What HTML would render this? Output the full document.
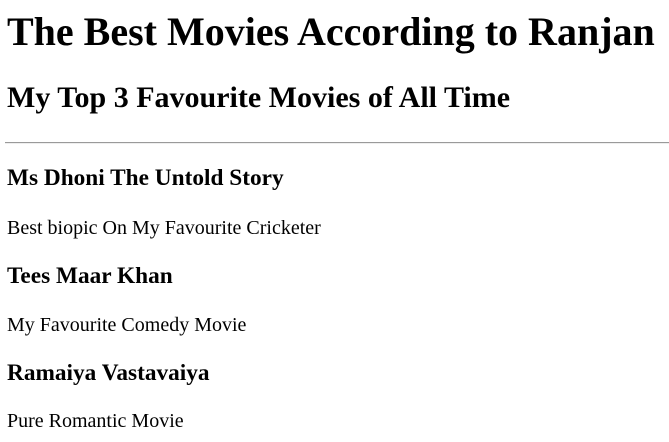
<!DOCTYPE html>
<html><head><meta charset="utf-8"><style>
html,body{margin:0;padding:0;background:#fff;width:669px;height:442px;overflow:hidden;position:relative}
div{position:absolute;left:7px;white-space:nowrap;line-height:1;font-family:"Liberation Serif",serif;color:#000}
.h1{font-size:40px;font-weight:bold}
.h2{font-size:30px;font-weight:bold}
.h3{font-size:23.3px;font-weight:bold}
.p{font-size:20px}
.hr{left:5px;right:0;top:142px;height:0;border-top:1px solid #9a9a9a;border-bottom:1px solid #eee}
</style></head><body>
<div class="h1" style="top:12px">The Best Movies According to Ranjan</div>
<div class="h2" style="top:83px">My Top 3 Favourite Movies of All Time</div>
<div class="hr"></div>
<div class="h3" style="top:167px">Ms Dhoni The Untold Story</div>
<div class="p" style="top:218px">Best biopic On My Favourite Cricketer</div>
<div class="h3" style="top:265px">Tees Maar Khan</div>
<div class="p" style="top:315px">My Favourite Comedy Movie</div>
<div class="h3" style="top:362px">Ramaiya Vastavaiya</div>
<div class="p" style="top:411px">Pure Romantic Movie</div>
</body></html>
